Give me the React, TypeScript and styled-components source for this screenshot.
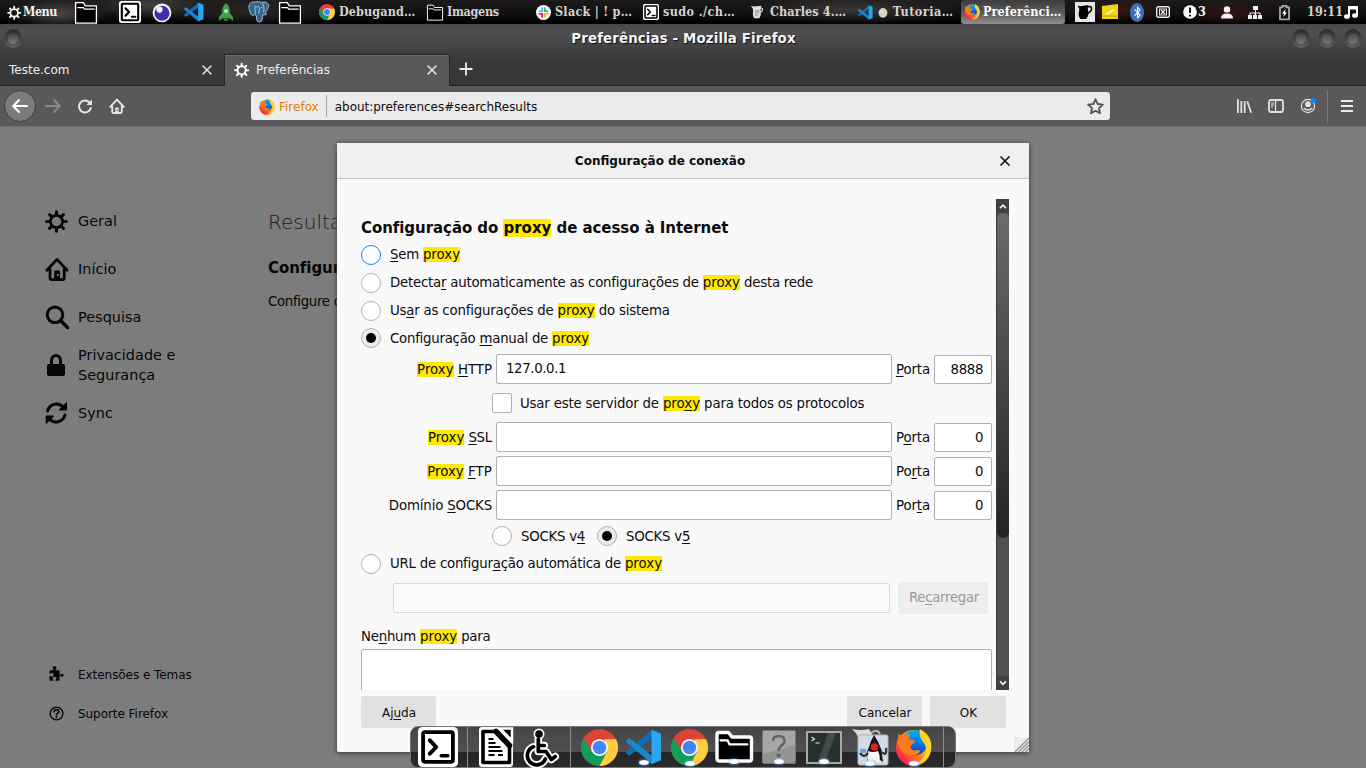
import React from "react";
import styled, { createGlobalStyle, css } from "styled-components";
import { FaBluetoothB } from "react-icons/fa";

const Global = createGlobalStyle`
  * { box-sizing: border-box; }
  html, body { margin: 0; padding: 0; overflow: hidden; }
  body { font-family: "DejaVu Sans", sans-serif; font-size: 13.333px; color: #0c0c0d; }
  svg { display: block; flex: none; overflow: visible; }
`;

/* ---------- desktop ---------- */

const Desktop = styled.div`
  position: relative;
  display: flex;
  flex-direction: column;
  width: 1366px;
  height: 768px;
  overflow: hidden;
  background: #7c7c7c;
`;

const Panel = styled.header`
  display: flex;
  align-items: center;
  height: 24px;
  flex: none;
  color: #d6d2cc;
  font: bold 12.5px "DejaVu Serif Condensed", "DejaVu Serif", serif;
  font-stretch: condensed;
  background:
    radial-gradient(ellipse 50px 16px at 60px 14px, #6a625faa, transparent),
    radial-gradient(ellipse 60px 14px at 150px 5px, #5a5552aa, transparent),
    radial-gradient(ellipse 90px 16px at 250px 12px, #3b373688, transparent),
    radial-gradient(ellipse 110px 14px at 850px 10px, #4d4947aa, transparent),
    radial-gradient(ellipse 60px 12px at 1120px 10px, #5a1c1877, transparent),
    radial-gradient(ellipse 50px 14px at 1230px 14px, #541a1877, transparent),
    linear-gradient(#1c1a1a, #100f0f 60%, #000);
`;

const PanelItem = styled.div<{ $w: number; $gap?: number; $pl?: number; $mr?: number; $active?: boolean; $bright?: boolean }>`
  display: flex;
  align-items: center;
  gap: ${(p) => p.$gap ?? 4}px;
  width: ${(p) => p.$w}px;
  height: 24px;
  margin-right: ${(p) => p.$mr ?? 0}px;
  padding-left: ${(p) => p.$pl ?? 0}px;
  flex: none;
  white-space: pre;
  ${(p) => p.$bright && css`color: #f3f1ee;`}
  ${(p) =>
    p.$active &&
    css`
      color: #fff;
      border-radius: 3px;
      background: linear-gradient(#3c3c3c, #5c5c5c 55%, #8e8e8e);
    `}
`;

const PanelText = styled.span<{ $ls?: number }>`
  letter-spacing: ${(p) => p.$ls ?? 0}px;
  line-height: 24px;
  height: 24px;
`;

/* ---------- browser window ---------- */

const TitleBar = styled.div`
  display: flex;
  align-items: center;
  gap: 8px;
  height: 30px;
  flex: none;
  padding: 0 4px 1px;
  background: linear-gradient(#474749, #505052 25%, #3d3d3f);
`;

const Title = styled.div`
  flex: 1;
  padding-left: 53px;
  text-align: center;
  color: #f4f4f4;
  font-size: 13.333px;
  font-weight: bold;
  letter-spacing: 0.15px;
  line-height: 30px;
  height: 30px;
  text-shadow: 1px 1px 1px #111;
`;

const WindowButton = styled.span`
  display: flex;
  align-items: center;
  justify-content: center;
  width: 18px;
  height: 19px;
  border-radius: 50%;
  background: linear-gradient(#2b2b2d, #5f5f61);
  &::after {
    content: "";
    width: 10px;
    height: 11px;
    border-radius: 50%;
    background: linear-gradient(#454547, #777779);
  }
`;

const TabStrip = styled.div`
  display: flex;
  height: 32px;
  flex: none;
  background: linear-gradient(#3d3d3f, #38383a 30%);
  color: #f0f0f2;
  font-size: 12px;
`;

const Tab = styled.div<{ $active?: boolean }>`
  display: flex;
  align-items: center;
  justify-content: space-between;
  width: 224px;
  padding: 1px 12px 0 9px;
  border-bottom: 1px solid #252526;
  ${(p) =>
    p.$active &&
    css`
      width: 226px;
      padding: 0 12px 1px 9px;
      border: 1px solid #252526;
      border-bottom: 0;
      background: #59595b;
      box-shadow: inset 0 1px #6a6a6c;
    `}
`;

const TabLabel = styled.span`
  display: flex;
  align-items: center;
  gap: 6px;
`;

const TabRest = styled.div`
  display: flex;
  flex: 1;
  align-items: center;
  padding: 0 0 1px 7px;
  border-bottom: 1px solid #252526;
`;

const Toolbar = styled.div`
  display: flex;
  align-items: center;
  height: 41px;
  flex: none;
  padding: 0 11px 0 4px;
  background: #59595b;
  border-bottom: 1px solid #6b6b6d;
`;

const BackButton = styled.span`
  display: flex;
  align-items: center;
  justify-content: center;
  width: 32px;
  height: 32px;
  border: 1px solid #3f3f41;
  border-radius: 50%;
  background: #7b7b7c;
`;

const NavIcons = styled.div<{ $ml: number; $gap: number }>`
  display: flex;
  align-items: center;
  gap: ${(p) => p.$gap}px;
  margin-left: ${(p) => p.$ml}px;
`;

const UrlBar = styled.div`
  display: flex;
  align-items: center;
  width: 859px;
  height: 28px;
  margin-left: 126px;
  padding: 0 6px 0 8px;
  border-radius: 3px;
  background: #ebebeb;
  box-shadow: 0 0 1px #333;
  font-size: 12px;
`;

const Identity = styled.span`
  display: flex;
  align-items: center;
  gap: 4px;
  height: 22px;
  padding: 1px 7px 0 0;
  margin-right: 8px;
  border-right: 1px solid #a5a5a5;
  color: #e57f00;
`;

const Url = styled.span`
  flex: 1;
  padding-top: 1px;
  letter-spacing: -0.02px;
`;

const ToolbarDivider = styled.span`
  width: 1px;
  height: 33px;
  margin: 0 13px 0 11px;
  background: #7a7a7c;
`;

const Page = styled.main`
  display: flex;
  flex: 1;
  background: #7c7c7c;
  color: #060607;
`;

const Side = styled.nav`
  display: flex;
  flex-direction: column;
  width: 268px;
  padding: 70px 0 0 45px;
`;

const SideItem = styled.div<{ $small?: boolean }>`
  display: flex;
  align-items: center;
  gap: ${(p) => (p.$small ? 13 : 9)}px;
  height: ${(p) => (p.$small ? 39 : 48)}px;
  padding-left: ${(p) => (p.$small ? 3 : 0)}px;
  font-size: ${(p) => (p.$small ? 12 : 14.4)}px;
  letter-spacing: ${(p) => (p.$small ? -0.05 : 0.04)}px;
  line-height: 20px;
`;

const SideSpacer = styled.div`
  height: 218px;
`;

const Results = styled.section`
  flex: 1;
  white-space: nowrap;
  padding-top: 82px;
`;

const ResultsTitle = styled.h1`
  margin: 0;
  font: 200 20px/27px "DejaVu Sans", sans-serif;
  color: #1a1a1b;
`;

const ResultsHeading = styled.h2`
  margin: 22px 0 0;
  font-size: 15px;
  line-height: 20px;
  letter-spacing: -0.05px;
`;

const ResultsText = styled.p`
  margin: 15px 0 0;
  font-size: 13.333px;
  line-height: 18px;
  letter-spacing: -0.32px;
`;

/* ---------- dialog ---------- */

const Dialog = styled.div`
  position: absolute;
  left: 337px;
  top: 143px;
  width: 692px;
  height: 609px;
  display: flex;
  flex-direction: column;
  background: #f9f9fa;
  border-radius: 2px;
  box-shadow: 0 1px 5px #333;
`;

const DialogHeader = styled.div`
  display: flex;
  align-items: center;
  height: 36px;
  flex: none;
  padding: 0 19px 0 0;
  border-bottom: 1px solid #c1c1c1;
  background: #f0f0f0;
  font-size: 12px;
  font-weight: bold;
`;

const DialogTitle = styled.span`
  flex: 1;
  padding-right: 17px;
  text-align: center;
`;

const Scroller = styled.div`
  display: flex;
  width: 648px;
  height: 491px;
  margin: 20px 0 0 24px;
  overflow: hidden;
`;

const Form = styled.div`
  width: 631px;
  margin-right: 4px;
  white-space: pre;
`;

const ScrollTrack = styled.div`
  display: flex;
  flex-direction: column;
  align-items: center;
  width: 13px;
  height: 491px;
  background: #505050;
  border-left: 1px solid #3a3a3a;
`;

const ScrollArrow = styled.div`
  display: flex;
  align-items: center;
  justify-content: center;
  width: 12px;
  height: 14px;
  background: #414141;
`;

const ScrollThumb = styled.div`
  width: 12px;
  height: 325px;
  margin-bottom: auto;
  border-radius: 6px;
  background: linear-gradient(#6b6b6b, #232323);
`;

const FormTitle = styled.h3`
  margin: 0;
  height: 42px;
  padding-top: 19px;
  font-size: 15px;
  line-height: 20px;
  letter-spacing: -0.06px;
`;

const Mark = styled.mark`
  background: #ffe900;
  color: inherit;
  letter-spacing: 0;
`;

const Key = styled.span`
  text-decoration: underline;
  text-underline-offset: 2px;
  text-decoration-thickness: 1px;
`;

const Row = styled.div<{ $h: number; $ml?: number }>`
  display: flex;
  align-items: center;
  height: ${(p) => p.$h}px;
  margin-left: ${(p) => p.$ml ?? 0}px;
`;

const Label = styled.label<{ $ml?: number; $w?: number; $lift?: number; $drop?: number; $ls?: number }>`
  margin-left: ${(p) => p.$ml ?? 0}px;
  padding-bottom: ${(p) => p.$lift ?? 0}px;
  padding-top: ${(p) => p.$drop ?? 0}px;
  letter-spacing: ${(p) => p.$ls ?? -0.25}px;
  ${(p) => p.$w && css`width: ${p.$w}px; text-align: right;`}
`;

const Radio = styled.span<{ $on?: boolean; $focus?: boolean; $ml?: number }>`
  display: flex;
  align-items: center;
  justify-content: center;
  width: 20px;
  height: 20px;
  flex: none;
  margin-left: ${(p) => p.$ml ?? 0}px;
  border: 1px solid ${(p) => (p.$focus ? "#0a84ff" : "#b1b1b1")};
  border-radius: 50%;
  background: ${(p) => (p.$on ? "#ebebeb" : "#fff")};
  &::after {
    content: "";
    width: 10px;
    height: 10px;
    border-radius: 50%;
    background: ${(p) => (p.$on ? "#000" : "transparent")};
  }
`;

const Check = styled.span`
  width: 20px;
  height: 20px;
  border: 1px solid #b1b1b1;
  border-radius: 2px;
  background: #fff;
`;

const Field = styled.div<{ $w: number; $port?: boolean; $disabled?: boolean }>`
  width: ${(p) => p.$w}px;
  height: ${(p) => (p.$port ? 29 : 30)}px;
  margin-left: 4px;
  margin-top: ${(p) => (p.$port ? 1 : 0)}px;
  padding: 0 ${(p) => (p.$port ? 8 : 9)}px;
  border: 1px solid ${(p) => (p.$disabled ? "#dadadb" : "#b1b1b1")};
  border-radius: 2px;
  background: ${(p) => (p.$disabled ? "#fbfbfb" : "#fff")};
  line-height: 28px;
  letter-spacing: -0.38px;
  text-align: ${(p) => (p.$port ? "right" : "left")};
`;

const Button = styled.button<{ $w: number; $ml?: number; $disabled?: boolean }>`
  width: ${(p) => p.$w}px;
  height: 32px;
  margin: 0 0 0 ${(p) => p.$ml ?? 0}px;
  padding: ${(p) => (p.$disabled ? "0 0 2px 2px" : "2px 0 0 1px")};
  border: 0;
  border-radius: 2px;
  background: ${(p) => (p.$disabled ? "#eeeeef" : "#e1e1e2")};
  color: ${(p) => (p.$disabled ? "#98989a" : "#0c0c0d")};
  font: ${(p) => (p.$disabled ? 13.333 : 12)}px "DejaVu Sans", sans-serif;
  letter-spacing: ${(p) => (p.$disabled ? -0.3 : 0)}px;
`;

const TextArea = styled.div`
  height: 60px;
  border: 1px solid #b1b1b1;
  border-radius: 2px;
  background: #fff;
`;

const DialogActions = styled.div`
  display: flex;
  padding: 6px 23px 0 24px;
`;

const Grip = styled.div`
  position: absolute;
  right: 0;
  bottom: 0;
  background: #ececec;
`;

/* ---------- dock ---------- */

const Dock = styled.div`
  position: absolute;
  left: 410px;
  top: 726px;
  display: flex;
  align-items: center;
  width: 546px;
  height: 42px;
  border: 1px solid #77777a;
  border-radius: 8px;
  background: linear-gradient(#454547, #505053 62%, #252527 63%, #2b2b2d);
`;

const DockItem = styled.span<{ $ml: number; $lit?: boolean }>`
  position: relative;
  margin-left: ${(p) => p.$ml}px;
  ${(p) =>
    p.$lit &&
    css`
      &::after {
        content: "";
        position: absolute;
        left: 50%;
        bottom: 0;
        width: 10px;
        height: 5px;
        margin-left: -5px;
        border-radius: 50%;
        background: radial-gradient(#fff 40%, #b9dcff);
        box-shadow: 0 0 3px #6fb6ff;
      }
    `}
`;

const DockDivider = styled.span<{ $ml: number }>`
  width: 1px;
  height: 40px;
  margin-left: ${(p) => p.$ml}px;
  background: #8b8b8d;
`;

/* ---------- icons ---------- */

const Gear = ({ s = 24, c = "currentColor" }: { s?: number; c?: string }) => (
  <svg width={s} height={s} viewBox="0 0 24 24" fill="none" stroke={c} strokeWidth="3" strokeLinecap="round">
    <circle cx="11.5" cy="12.5" r="6.1" strokeWidth="2.8" />
    {[0, 45, 90, 135, 180, 225, 270, 315].map((a) => (
      <path key={a} d="M11.5 5.300V2.700" transform={`rotate(${a} 11.5 12.5)`} />
    ))}
  </svg>
);

const Home = () => (
  <svg width="24" height="24" viewBox="0 0 24 24" fill="none" stroke="currentColor" strokeWidth="2.8" strokeLinecap="round" strokeLinejoin="round">
    <path d="M1.8 13.2 12 2.4l10.2 10.8M5 12.5V21a1.6 1.6 0 0 0 1.6 1.6h11a1.6 1.6 0 0 0 1.6-1.6v-8.5" />
    <path d="M9.2 22.5v-8a1 1 0 0 1 1-1h3.8a1 1 0 0 1 1 1v8z" fill="currentColor" stroke="none" />
    <rect x="12" y="17" width="1.7" height="2" fill="#7c7c7c" stroke="none" />
  </svg>
);

const Search = () => (
  <svg width="24" height="24" viewBox="0 0 24 24" fill="none" stroke="currentColor" strokeWidth="3" strokeLinecap="round">
    <circle cx="10" cy="9.8" r="7.8" />
    <path d="m15.8 15.8 6.7 6.7" strokeWidth="3.4" />
  </svg>
);

const Lock = () => (
  <svg width="24" height="24" viewBox="0 0 24 24">
    <path d="M6.500 12V7.500a4.500 5 0 0 1 9 0V12" fill="none" stroke="currentColor" strokeWidth="3" />
    <rect x="2" y="11" width="18" height="12" rx="2" fill="currentColor" />
  </svg>
);

const Sync = () => (
  <svg width="24" height="24" viewBox="0 0 24 24" fill="none" stroke="currentColor" strokeWidth="3" strokeLinecap="round">
    <path d="M2.600 10a9 9 0 0 1 15.800-3.500M20 14a9 9 0 0 1-15.800 3.500" />
    <path d="M21.500 2v7h-7z" fill="currentColor" strokeWidth="1.2" strokeLinejoin="round" />
    <path d="M1.300 22v-7h7z" fill="currentColor" strokeWidth="1.2" strokeLinejoin="round" />
  </svg>
);

const Puzzle = () => (
  <svg width="17" height="17" viewBox="0 0 16 16" fill="currentColor">
    <path d="M14.5 8c-1 0-1 1-2 1a.5.5 0 0 1-.5-.5V5.500a1 1 0 0 0-1-1H8.500A.5.5 0 0 1 8 4c0-1 1-1 1-2 0-.8-.8-1.500-2-1.500S5 1.200 5 2c0 1 1 1 1 2a.5.5 0 0 1-.5.5H3a1 1 0 0 0-1 1v2a.5.5 0 0 0 .5.5c1 0 1-1 2-1 .8 0 1.500.8 1.500 2s-.7 2-1.500 2c-1 0-1-1-2-1a.5.5 0 0 0-.5.5V14a1 1 0 0 0 1 1h2.500a.5.5 0 0 0 .5-.5c0-1-1-1-1-2 0-.7.9-1.500 2-1.500s2 .8 2 1.500c0 1-1 1-1 2a.5.5 0 0 0 .5.5H11a1 1 0 0 0 1-1v-3.500a.5.5 0 0 1 .5-.5c1 0 1 1 2 1 .8 0 1.500-.7 1.500-1.500S15.300 8 14.500 8z" transform="translate(-.5 -.3) scale(.95)" />
  </svg>
);

const Help = () => (
  <svg width="17" height="17" viewBox="0 0 16 16" fill="none" stroke="currentColor" strokeWidth="1.3">
    <circle cx="8" cy="8" r="6" />
    <path d="M5.800 6.400A2.200 2.200 0 0 1 10.200 6.400C10.200 7.700 8 8 8 9.300" strokeLinecap="round" strokeWidth="1.5" />
    <circle cx="8" cy="11.3" r=".9" fill="currentColor" stroke="none" />
  </svg>
);

const Cross = ({ s = 10, c = "#e6e6e6", w = 1.5 }: { s?: number; c?: string; w?: number }) => (
  <svg width={s} height={s} viewBox="0 0 10 10" stroke={c} strokeWidth={w} strokeLinecap="round">
    <path d="m1 1 8 8M9 1 1 9" />
  </svg>
);

const Plus = () => (
  <svg width="18" height="18" viewBox="0 0 18 18" stroke="#eee" strokeWidth="1.8">
    <path d="M9 2.500v13M2.500 9h13" />
  </svg>
);

const Arrow = ({ flip, c }: { flip?: boolean; c: string }) => (
  <svg width="16" height="16" viewBox="0 0 16 16" fill="none" stroke={c} strokeWidth="2" strokeLinecap="round" strokeLinejoin="round">
    <path d="M15 8H1.500M7 2 1.200 8 7 14" transform={flip ? "rotate(180 8 8)" : undefined} />
  </svg>
);

const Reload = () => (
  <svg width="16" height="16" viewBox="0 0 16 16" fill="none" stroke="#e6e6e6" strokeWidth="2" strokeLinecap="round">
    <path d="M12.500 4.500A6 6 0 1 0 13.800 10" />
    <path d="M15 1.500V7H9.500z" fill="#e6e6e6" stroke="none" />
  </svg>
);

const NavHome = () => (
  <svg width="16" height="16" viewBox="0 0 16 16" fill="none" stroke="#e6e6e6" strokeWidth="1.9" strokeLinecap="round" strokeLinejoin="round">
    <path d="M1.200 8.800 8 1.600l6.800 7.200M3.200 8.500v5.300q0 1.200 1.200 1.200h7.200q1.200 0 1.200-1.200V8.500" />
    <path d="M6.300 15V9.500h3.400V15z" fill="#e6e6e6" stroke="none" />
    <rect x="7.8" y="11.5" width="1" height="1.5" fill="#59595b" stroke="none" />
  </svg>
);

const Star = () => (
  <svg width="17" height="17" viewBox="0 0 16 16" fill="none" stroke="#555557" strokeWidth="1.8" strokeLinejoin="round">
    <path d="m8 1.200 2 4.400 4.900.6-3.600 3.300.9 4.800L8 12l-4.200 2.300.9-4.800L1.100 6.200 6 5.600z" />
  </svg>
);

const Library = () => (
  <svg width="16" height="16" viewBox="0 0 16 16" stroke="#e0e0e1" strokeWidth="1.8" fill="none">
    <path d="M1.900 1v14M5.300 3v12M8.700 3v12M11.200 3.300l4 11.500" />
  </svg>
);

const Sidebar = () => (
  <svg width="16" height="16" viewBox="0 0 16 16" stroke="#e0e0e1" fill="none">
    <rect x="1" y="2" width="14" height="12" rx="2" strokeWidth="1.8" />
    <path d="M7.500 2v12" strokeWidth="1.3" />
    <path d="M3 5h3M3 7h3M3 9h2" />
  </svg>
);

const Account = () => (
  <svg width="16" height="16" viewBox="0 0 16 16">
    <circle cx="8" cy="8" r="6.6" fill="none" stroke="#e0e0e1" strokeWidth="1.2" />
    <circle cx="8" cy="6.2" r="2.9" fill="#e0e0e1" />
    <path d="M3.400 9.800q1.800 0 2.600.8 2 1.200 4 0 .8-.8 2.600-.8a5 5 0 0 1-9.200 0" fill="#e0e0e1" />
    <circle cx="13.3" cy="2.4" r="2.7" fill="#0a84ff" />
  </svg>
);

const Burger = () => (
  <svg width="12" height="14" viewBox="0 0 12 14" stroke="#ececec" strokeWidth="2">
    <path d="M0 2h12M0 7h12M0 12h12" />
  </svg>
);

const Chevron = ({ up }: { up?: boolean }) => (
  <svg width="8" height="5" viewBox="0 0 8 5" fill="none" stroke="#f2f2f2" strokeWidth="1.7">
    <path d={up ? "M1 4.200 4 1.200l3 3" : "m1 .3 3 3 3-3"} />
  </svg>
);

const Folder = ({ s = 22 }: { s?: number }) => (
  <svg width={s} height={s} viewBox="0 -1 22 22">
    <path d="M.6.6h7.800l1.800 3.200h11.200v17.400H.6z" fill="#000" stroke="#fff" strokeWidth="1.3" />
    <path d="M2.300 5.600h6.200l1.200 1.600h10" fill="none" stroke="#fff" strokeWidth="1.3" />
  </svg>
);

const DockFolder = () => (
  <svg width="40" height="34" viewBox="0 0 40 34">
    <path d="M4.500 2.500h10l3.500 4.500h17.500a2 2 0 0 1 2 2v20a2 2 0 0 1-2 2h-30.500a2 2 0 0 1-2-2v-24.500a2 2 0 0 1 1.500-2z" fill="#000" stroke="#fff" strokeWidth="3.4" strokeLinejoin="round" />
    <path d="M6.500 10.300h7l2 4h18" fill="none" stroke="#fff" strokeWidth="2.2" strokeLinecap="round" />
  </svg>
);

const Term = ({ s = 22 }: { s?: number }) => (
  <svg width={s} height={s} viewBox="0 0 22 22">
    <rect width="22" height="22" rx="2.5" fill="#fff" />
    <rect x="2.8" y="2.8" width="16.4" height="16.4" rx="1" fill="#fff" stroke="#000" strokeWidth="2.1" />
    <path d="m6.500 7.300 3.500 3.700-3.500 3.700" fill="none" stroke="#000" strokeWidth="2.2" strokeLinejoin="round" strokeLinecap="round" />
    <path d="M12.800 15.800h3.600" stroke="#000" strokeWidth="1.9" strokeLinecap="round" />
  </svg>
);

const EyeBall = () => (
  <svg width="20" height="20" viewBox="0 0 20 20">
    <circle cx="10" cy="10.8" r="9.4" fill="#f4f4fa" />
    <circle cx="10" cy="11.3" r="7.5" fill="#4030a8" />
    <circle cx="7.5" cy="7.6" r="3.1" fill="#f4f4fa" />
  </svg>
);

const VSCode = ({ s = 20 }: { s?: number }) => (
  <svg width={s} height={s} viewBox="0 0 36 36">
    <path d="M26 1 .500 22.500 0 24l2.500 2.500L4 26.500 26 9.500z" fill="#0f6db3" />
    <path d="M26 35 .500 13.500 0 12l2.500-2.500L4 9.500 26 26.500z" fill="#1988cf" />
    <path d="M25.500.8 35 4.800v26.400l-9.500 4z" fill="#2aa7f2" />
  </svg>
);

const Rocket = () => (
  <svg width="16" height="19" viewBox="0 0 16 19">
    <path d="M8 .3c3 2.200 4 5.500 3.700 9.700l3 3.500.6 4.500-3.300-2.500H4L.7 18l.6-4.500 3-3.500C4 5.800 5 2.500 8 .3z" fill="#43a047" />
    <circle cx="8" cy="8" r="2" fill="#b9e3bb" />
    <path d="M6 16h4v2H6z" fill="#2e7031" />
  </svg>
);

const Elephant = () => (
  <svg width="22" height="22" viewBox="0 0 22 22">
    <path d="M7 1C3 .5.7 2.500 1 6c.3 3.500 1.500 8 3.500 8.500 1 .2 1.700-.5 2.300-1.200.2 1 .9 1.200 1.700 1.500V18q.3 3 3 3 2.700-.2 2.800-3l.3-4.200q2 .4 4-.8-1.200-.4-1.600-1C19.500 9 21 5.500 20.500 3.500 19 1 16 .5 13.500 1.400 11.500.4 9 .5 7 1z" fill="#336791" stroke="#a9c3d6" strokeWidth=".9" />
    <path d="M7.500 13c-.8-3 0-6-.5-8.500M14 1.800c2.200 3 2.400 6.500 1.500 9.500M8 6q2-1 3.500.5c.5 2-.5 3.500-.8 6M12.800 6.500h1.500" fill="none" stroke="#c5d7e4" strokeWidth=".8" />
  </svg>
);

const Chrome = ({ s = 16 }: { s?: number }) => (
  <svg width={s} height={s} viewBox="-20 -20 40 40">
    <circle r="20" fill="#db4437" />
    <path d="M-17.320-10A20 20 0 0 0 0 20L8 4.600-8 4.600z" fill="#0f9d58" />
    <path d="M17.900-9A20 20 0 0 1 0 20L8.500 4 5-9z" fill="#ffcd40" />
    <circle r="9.3" fill="#f4f4f4" />
    <circle r="7.3" fill="#4285f4" />
  </svg>
);

const Slack = () => (
  <svg width="15" height="15" viewBox="0 0 16 16">
    <circle cx="8" cy="8" r="8" fill="#fff" />
    <g strokeWidth="2" strokeLinecap="round">
      <path d="M6.600 3.500v3M4 6.600h1" stroke="#36c5f0" />
      <path d="M9.400 3.500v3M12 6.600h-1" stroke="#2eb67d" />
      <path d="M6.600 12.500v-3M3.500 9.400h3" stroke="#e01e5a" />
      <path d="M9.400 12.500v-3M12.500 9.400h-3" stroke="#ecb22e" />
    </g>
  </svg>
);

const Jug = ({ dark }: { dark?: boolean }) => (
  <svg width={dark ? 20 : 14} height={dark ? 20 : 16} viewBox="0 0 20 20">
    {dark && <rect width="20" height="20" fill="#e6e6e6" />}
    <path d="M12.500 5q4.500-1.500 4 2-.3 3-4.500 4.500" fill="none" stroke={dark ? "#000" : "#cfd3cf"} strokeWidth="1.6" />
    <path
      d={dark ? "M2.500 3.500 5 4.200 13.500 3Q12 6 13.300 9q1 4.500-2.300 8H5.500Q2.500 13 4 9.500 5 6.500 2.500 3.500z" : "M0 1 4 2 15 1Q13 5 14 9q1 5-2 10H4.500Q1.500 14 3 9 3.500 5 0 1z"}
      fill={dark ? "#000" : "#dfe3df"}
    />
    {!dark && <path d="M6 7h6v5H6z" fill="#c5a0a4" />}
    {!dark && <path d="M5.500 12h4v4h-4z" fill="#82c890" />}
  </svg>
);

const Firefox = ({ s = 16 }: { s?: number }) => (
  <svg width={s} height={s} viewBox="0 0 36 36">
    <defs>
      <linearGradient id="foxBody" x1=".9" y1=".1" x2=".1" y2=".8">
        <stop offset="0" stopColor="#ffe226" />
        <stop offset=".4" stopColor="#ffa516" />
        <stop offset=".7" stopColor="#ff5a2b" />
        <stop offset="1" stopColor="#f5224f" />
      </linearGradient>
      <linearGradient id="globe" x1="0" y1="0" x2="0" y2="1">
        <stop offset="0" stopColor="#00b2ff" />
        <stop offset="1" stopColor="#0b3fd0" />
      </linearGradient>
    </defs>
    <circle cx="18" cy="18.5" r="17.3" fill="url(#foxBody)" />
    <circle cx="19" cy="13.5" r="12.3" fill="url(#globe)" />
    <path d="M2.500 13 3.500 4.500Q6 5.500 7.500 8q3-3.500 7-3.500-1.500 3 0 6l5 .8q.3 2.200-3.700 4.200.3 1.800-1.300 2.500 2.500 4 7.500 2.500 2.200-.4 2.500 1-2 4.500-8 4.500Q5 26 2.500 13z" fill="#ff7a1c" />
    <path d="M24 0q9 4 11 13 1.500 10-6 18.500-5 4-12 4 11-5 13-13 1-6-3-10-4-6-3-12.500z" fill="#ffd42a" />
  </svg>
);

const Note = () => (
  <svg width="17" height="16" viewBox="0 0 17 16">
    <path d="M0 2 16 0v15H0z" fill="#f2d411" />
    <path d="m3 10 8-5 2 1-8 5z" fill="#fff7a8" />
    <path d="M0 12h16" stroke="#c9a500" />
  </svg>
);

const BluetoothBadge = styled.span`
  display: flex;
  align-items: center;
  justify-content: center;
  width: 14px;
  height: 19px;
  border-radius: 50%;
  background: #3f6fb5;
  color: #fff;
`;

const Kbd = () => (
  <svg width="14" height="12" viewBox="0 0 14 12" fill="none" stroke="#e8e8e8">
    <rect x=".7" y=".7" width="12.6" height="10.6" rx="1.5" strokeWidth="1.4" />
    <rect x="3.5" y="3" width="7" height="6" strokeWidth="1" />
    <path d="m5 4 4 4M9 4 5 8" strokeWidth="1.3" />
  </svg>
);

const Alert = () => (
  <svg width="14" height="14" viewBox="0 0 14 14">
    <circle cx="7" cy="7" r="6.8" fill="#fff" />
    <path d="M7 2.500v5.500M7 9.800v1.800" stroke="#111" strokeWidth="2" />
  </svg>
);

const Person = () => (
  <svg width="12" height="13" viewBox="0 0 12 13" fill="#f2f2f2">
    <circle cx="6" cy="3.4" r="3.2" />
    <path d="M0 12.500q0-5 6-5t6 5z" />
  </svg>
);

const Network = () => (
  <svg width="14" height="13" viewBox="0 0 14 13" fill="#f2f2f2">
    <path d="M5 0h5v4H5zM0 9h4v4H0zM5 9h4v4H5zM10 9h4v4h-4zM7 4h1v2.500h4.500V9h-1V7.500H8V9H6.500V7.500h-4V9h-1V6.500H7z" />
  </svg>
);

const Battery = () => (
  <svg width="11" height="15" viewBox="0 0 11 15">
    <path d="M3.500.8h4v1.500H10v12H1v-12h2.500z" fill="none" stroke="#a7a7a7" strokeWidth="1.8" />
    <path d="M6.500 4 3 8.500h2L4.300 12 8 7.500H6z" fill="#fff" />
  </svg>
);

const Music = () => (
  <svg width="14" height="14" viewBox="0 0 14 14" fill="#fff">
    <path d="M4 1h10v10H12V4.500H6V12H4z" />
    <ellipse cx="3" cy="11.5" rx="3" ry="2.3" />
    <ellipse cx="11" cy="10.5" rx="3" ry="2.3" />
  </svg>
);

const DocIcon = () => (
  <svg width="38" height="40" viewBox="0 0 38 40">
    <path d="M4 3h15l13 14v20H4z" fill="#fff" stroke="#fff" strokeWidth="6" strokeLinejoin="round" />
    <path d="M22 1.500h12v12z" fill="#000" stroke="#fff" strokeWidth="2.5" />
    <path d="M5 4.500h12.500l14 14v17H5z" fill="#fff" stroke="#000" strokeWidth="3.6" strokeLinejoin="round" />
    <path d="M18 4.500 31.500 18.500" stroke="#000" strokeWidth="5.5" strokeLinecap="round" />
    <path d="M10.500 12h5M10.500 16h7M10.500 20h12M10.500 24h14M10.500 28h6M20 28h5" stroke="#000" strokeWidth="1.9" />
  </svg>
);

const wheelPaths = (
  <>
    <path d="M14.300 11V23.500H22l5.300 8 4-3M14.300 17.500h6" fill="none" />
    <path d="M9.500 18.800A9.300 9.300 0 1 0 21.300 31" fill="none" />
  </>
);

const Wheel = () => (
  <svg width="34" height="38" viewBox="0 0 34 38" strokeLinecap="round" strokeLinejoin="round">
    <g stroke="#fff" strokeWidth="7.5">{wheelPaths}</g>
    <circle cx="15" cy="6" r="5.5" fill="#fff" />
    <g stroke="#000" strokeWidth="3.7">{wheelPaths}</g>
    <circle cx="15" cy="6" r="3.8" fill="#000" />
  </svg>
);

const Question = () => (
  <svg width="34" height="34" viewBox="0 0 34 34">
    <rect x=".5" y=".5" width="33" height="33" rx="1.5" fill="#949494" stroke="#777" />
    <path d="M1 1h32v14L1 24z" fill="#a6a6a6" />
    <path d="M11 11q0-5 6-5 5.500 0 5.500 5 0 3-3.500 5-2.500 2-2.500 5" fill="none" stroke="#626262" strokeWidth="2.3" />
    <circle cx="16.5" cy="25.5" r="2" fill="#626262" />
  </svg>
);

const DarkTerm = () => (
  <svg width="36" height="33" viewBox="0 0 36 33">
    <rect x="1" y="1" width="34" height="31" fill="#26302e" stroke="#a5aaa8" strokeWidth="2" />
    <path d="M22 2h8L19 31h-7z" fill="#4b5855" opacity=".7" />
    <path d="m5.500 6 3 2-3 2M9.500 12h4" fill="none" stroke="#e4e4e4" strokeWidth="1.1" />
  </svg>
);

const Duke = () => (
  <svg width="38" height="38" viewBox="0 0 38 38">
    <path d="M1 1q9 2 17 0l3 5-3 15H8Q9 7 1 1z" fill="#d9dcdc" />
    <path d="M20 5q6-5 9 1" fill="none" stroke="#bbb" strokeWidth="2" />
    <rect x="7" y="7" width="30" height="30" rx="2" fill="#d3dbe6" stroke="#aab4c2" />
    <path d="M23 7Q28 14 30.500 22l1.500 12-6-4-9 5q-3-9 1-16 2-7 5-12z" fill="#161616" />
    <path d="M17 23q5 2 10 0 3 6 1 12-3-1-5-3-2 2-5 4-3-6-1-13z" fill="#f6f6f6" />
    <path d="M9 25q4 6 8 0M31 24q5 5 4-4" fill="none" stroke="#333" strokeWidth="2.3" />
    <path d="M9 21h6v4H9z" fill="#5ea9e6" />
    <circle cx="23.5" cy="19" r="3.8" fill="#dd2020" />
  </svg>
);

const Stripes = () => (
  <svg width="15" height="15" viewBox="0 0 15 15" fill="none" stroke="#929292" strokeWidth="1.3">
    <path d="M1 15 15 1M4.500 15 15 4.500M8 15l7-7M11.500 15l3.500-3.500" />
  </svg>
);

/* ---------- composition ---------- */

const P = () => <Mark>proxy</Mark>;

type ProxyRowProps = { label: React.ReactNode; port: React.ReactNode; host?: string; value: string; h: number; ls?: number };

const ProxyRow = ({ label, port, host, value, h, ls }: ProxyRowProps) => (
  <Row $h={h}>
    <Label $w={131} $ls={ls}>{label}</Label>
    <Field $w={396}>{host}</Field>
    <Label $ml={4} $w={34} $ls={-0.12}>{port}</Label>
    <Field $w={58} $port>{value}</Field>
  </Row>
);

export default function App() {
  return (
    <Desktop>
      <Global />
      <Panel>
        <PanelItem $w={75} $gap={1} $pl={7} $bright><Gear s={15} /><PanelText $ls={-0.5}>Menu</PanelText></PanelItem>
        <PanelItem $w={44}><Folder /></PanelItem>
        <PanelItem $w={33}><Term s={22} /></PanelItem>
        <PanelItem $w={32}><EyeBall /></PanelItem>
        <PanelItem $w={34}><VSCode /></PanelItem>
        <PanelItem $w={30}><Rocket /></PanelItem>
        <PanelItem $w={31}><Elephant /></PanelItem>
        <PanelItem $w={40}><Folder /></PanelItem>
        <PanelItem $w={108}><Chrome s={16} /><PanelText $ls={0.1}>Debugand…</PanelText></PanelItem>
        <PanelItem $w={109}><Folder s={16} /><PanelText $ls={-0.3}>Imagens</PanelText></PanelItem>
        <PanelItem $w={107} $gap={4}><Slack /><PanelText $ls={0.25}>Slack | ! p…</PanelText></PanelItem>
        <PanelItem $w={108}><Term s={16} /><PanelText $ls={0.4}>sudo ./ch…</PanelText></PanelItem>
        <PanelItem $w={107} $gap={5}><Jug /><PanelText $ls={0.1}>Charles 4.…</PanelText></PanelItem>
        <PanelItem $w={103} $gap={5}><VSCode s={15} /><PanelText $ls={0.5}>● Tutoria…</PanelText></PanelItem>
        <PanelItem $w={104} $gap={3} $pl={3} $mr={10} $active><Firefox /><PanelText $ls={0.1}>Preferênci…</PanelText></PanelItem>
        <PanelItem $w={27}><Jug dark /></PanelItem>
        <PanelItem $w={28}><Note /></PanelItem>
        <PanelItem $w={26}><BluetoothBadge><FaBluetoothB size={13} /></BluetoothBadge></PanelItem>
        <PanelItem $w={27}><Kbd /></PanelItem>
        <PanelItem $w={38} $gap={1} $bright><Alert /><PanelText>3</PanelText></PanelItem>
        <PanelItem $w={27}><Person /></PanelItem>
        <PanelItem $w={31}><Network /></PanelItem>
        <PanelItem $w={28}><Battery /></PanelItem>
        <PanelItem $w={60} $gap={1}><PanelText $ls={0.15}>19:11</PanelText><Music /></PanelItem>
      </Panel>

      <TitleBar>
        <WindowButton />
        <Title>Preferências - Mozilla Firefox</Title>
        <WindowButton /><WindowButton /><WindowButton />
      </TitleBar>
      <TabStrip>
        <Tab><span>Teste.com</span><Cross /></Tab>
        <Tab $active><TabLabel><Gear s={16} c="#fff" />Preferências</TabLabel><Cross /></Tab>
        <TabRest><Plus /></TabRest>
      </TabStrip>
      <Toolbar>
        <BackButton><Arrow c="#fff" /></BackButton>
        <NavIcons $ml={9} $gap={16}><Arrow flip c="#8b8b8c" /><Reload /><NavHome /></NavIcons>
        <UrlBar>
          <Identity><Firefox />Firefox</Identity>
          <Url>about:preferences#searchResults</Url>
          <Star />
        </UrlBar>
        <NavIcons $ml={126} $gap={16}><Library /><Sidebar /><Account /></NavIcons>
        <ToolbarDivider />
        <Burger />
      </Toolbar>

      <Page>
        <Side>
          <SideItem><Gear />Geral</SideItem>
          <SideItem><Home />Início</SideItem>
          <SideItem><Search />Pesquisa</SideItem>
          <SideItem><Lock /><span>Privacidade e<br />Segurança</span></SideItem>
          <SideItem><Sync />Sync</SideItem>
          <SideSpacer />
          <SideItem $small><Puzzle />Extensões e Temas</SideItem>
          <SideItem $small><Help />Suporte Firefox</SideItem>
        </Side>
        <Results>
          <ResultsTitle>Resulta</ResultsTitle>
          <ResultsHeading>Configur</ResultsHeading>
          <ResultsText>Configure c</ResultsText>
        </Results>
      </Page>

      <Dialog>
        <DialogHeader><DialogTitle>Configuração de conexão</DialogTitle><Cross c="#111" w={1.7} /></DialogHeader>
        <Scroller>
          <Form>
            <FormTitle>Configuração do <P /> de acesso à Internet</FormTitle>
            <Row $h={28}><Radio $focus /><Label $ml={9} $lift={2}><Key>S</Key>em <P /></Label></Row>
            <Row $h={28}><Radio /><Label $ml={9} $lift={2} $ls={-0.23}>Detecta<Key>r</Key> automaticamente as configurações de <P /> desta rede</Label></Row>
            <Row $h={28}><Radio /><Label $ml={9} $lift={2} $ls={-0.2}>Us<Key>a</Key>r as configurações de <P /> do sistema</Label></Row>
            <Row $h={26}><Radio $on /><Label $ml={9} $ls={-0.25}>Configuração <Key>m</Key>anual de <P /></Label></Row>
            <ProxyRow h={36} ls={0} label={<><Mark>Proxy</Mark> <Key>H</Key>TTP</>} port={<><Key>P</Key>orta</>} host="127.0.0.1" value="8888" />
            <Row $h={32} $ml={131}><Check /><Label $ml={8} $ls={-0.18}>Usar este servidor de <Mark>pro<Key>x</Key>y</Mark> para todos os protocolos</Label></Row>
            <ProxyRow h={36} label={<><Mark>Proxy</Mark> <Key>S</Key>SL</>} port={<>P<Key>o</Key>rta</>} value="0" />
            <ProxyRow h={32} ls={0.1} label={<><Mark>Proxy</Mark> <Key>F</Key>TP</>} port={<>Po<Key>r</Key>ta</>} value="0" />
            <ProxyRow h={36} ls={-0.15} label={<>Domínio <Key>S</Key>OCKS</>} port={<>Por<Key>t</Key>a</>} value="0" />
            <Row $h={26} $ml={131}>
              <Radio /><Label $ml={9}>SOCKS v<Key>4</Key></Label>
              <Radio $on $ml={12} /><Label $ml={9}>SOCKS v<Key>5</Key></Label>
            </Row>
            <Row $h={29}><Radio /><Label $ml={9} $lift={1} $ls={-0.24}>URL de configur<Key>a</Key>ção automática de <P /></Label></Row>
            <Row $h={40} $ml={28}><Field $w={497} $disabled /><Button $w={90} $ml={8} $disabled>Re<Key>c</Key>arregar</Button></Row>
            <Row $h={31}><Label $drop={5}>Ne<Key>n</Key>hum <P /> para</Label></Row>
            <TextArea />
          </Form>
          <ScrollTrack>
            <ScrollArrow><Chevron up /></ScrollArrow>
            <ScrollThumb />
            <ScrollArrow><Chevron /></ScrollArrow>
          </ScrollTrack>
        </Scroller>
        <DialogActions>
          <Button $w={75}>Aj<Key>u</Key>da</Button>
          <Button $w={75} $ml={411}>Cancelar</Button>
          <Button $w={76} $ml={8}>OK</Button>
        </DialogActions>
        <Grip><Stripes /></Grip>
      </Dialog>

      <Dock>
        <DockItem $ml={7}><Term s={40} /></DockItem>
        <DockDivider $ml={9} />
        <DockItem $ml={10}><DocIcon /></DockItem>
        <DockItem $ml={8}><Wheel /></DockItem>
        <DockDivider $ml={12} />
        <DockItem $ml={10}><Chrome s={37} /></DockItem>
        <DockItem $ml={8} $lit><VSCode s={36} /></DockItem>
        <DockItem $ml={9} $lit><Chrome s={37} /></DockItem>
        <DockItem $ml={6} $lit><DockFolder /></DockItem>
        <DockItem $ml={8} $lit><Question /></DockItem>
        <DockItem $ml={10} $lit><DarkTerm /></DockItem>
        <DockItem $ml={9} $lit><Duke /></DockItem>
        <DockItem $ml={6} $lit><Firefox s={37} /></DockItem>
        <DockDivider $ml={11} />
      </Dock>
    </Desktop>
  );
}
